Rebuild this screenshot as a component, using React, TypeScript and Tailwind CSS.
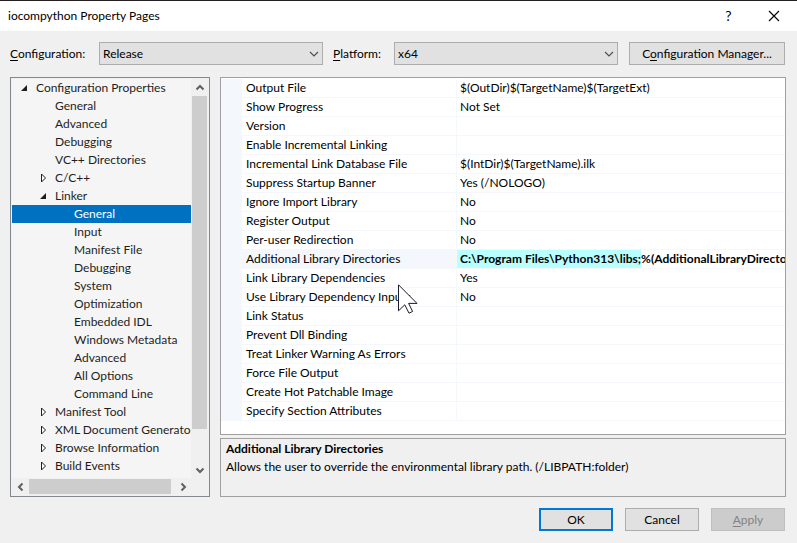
import { useState } from 'react';

type TreeNode = {
  label: string;
  level: 0 | 1 | 2;
  state?: 'open' | 'closed';
};

const tree: TreeNode[] = [
  { label: 'Configuration Properties', level: 0, state: 'open' },
  { label: 'General', level: 1 },
  { label: 'Advanced', level: 1 },
  { label: 'Debugging', level: 1 },
  { label: 'VC++ Directories', level: 1 },
  { label: 'C/C++', level: 1, state: 'closed' },
  { label: 'Linker', level: 1, state: 'open' },
  { label: 'General', level: 2 },
  { label: 'Input', level: 2 },
  { label: 'Manifest File', level: 2 },
  { label: 'Debugging', level: 2 },
  { label: 'System', level: 2 },
  { label: 'Optimization', level: 2 },
  { label: 'Embedded IDL', level: 2 },
  { label: 'Windows Metadata', level: 2 },
  { label: 'Advanced', level: 2 },
  { label: 'All Options', level: 2 },
  { label: 'Command Line', level: 2 },
  { label: 'Manifest Tool', level: 1, state: 'closed' },
  { label: 'XML Document Generator', level: 1, state: 'closed' },
  { label: 'Browse Information', level: 1, state: 'closed' },
  { label: 'Build Events', level: 1, state: 'closed' },
];

const indent = ['pl-0', 'pl-[19px]', 'pl-[38px]'];

const properties = [
  ['Output File', '$(OutDir)$(TargetName)$(TargetExt)'],
  ['Show Progress', 'Not Set'],
  ['Version', ''],
  ['Enable Incremental Linking', ''],
  ['Incremental Link Database File', '$(IntDir)$(TargetName).ilk'],
  ['Suppress Startup Banner', 'Yes (/NOLOGO)'],
  ['Ignore Import Library', 'No'],
  ['Register Output', 'No'],
  ['Per-user Redirection', 'No'],
  ['Additional Library Directories', 'C:\\Program Files\\Python313\\libs;%(AdditionalLibraryDirectories)'],
  ['Link Library Dependencies', 'Yes'],
  ['Use Library Dependency Inputs', 'No'],
  ['Link Status', ''],
  ['Prevent Dll Binding', ''],
  ['Treat Linker Warning As Errors', ''],
  ['Force File Output', ''],
  ['Create Hot Patchable Image', ''],
  ['Specify Section Attributes', ''],
];

const chevrons = {
  up: 'M1.5 6.5 5 3l3.5 3.5',
  down: 'M1.5 3.5 5 7l3.5-3.5',
  left: 'M6.5 1.5 3 5l3.5 3.5',
  right: 'M3.5 1.5 7 5 3.5 8.5',
};

function ScrollButton({ dir }: { dir: keyof typeof chevrons }) {
  return (
    <button aria-label={`Scroll ${dir}`} className="flex size-[17px] shrink-0 items-center justify-center">
      <svg width="10" height="10" viewBox="0 0 10 10" fill="none" stroke="#606060" strokeWidth="2">
        <path d={chevrons[dir]} />
      </svg>
    </button>
  );
}

function Expander({ state }: { state?: 'open' | 'closed' }) {
  return (
    <span className="flex w-6 shrink-0 items-center pl-2">
      {state === 'open' && (
        <svg width="8" height="8" viewBox="0 0 8 8">
          <path d="M7 1v6H1z" fill="#1e1e1e" />
        </svg>
      )}
      {state === 'closed' && (
        <svg width="8" height="10" viewBox="0 0 8 10">
          <path d="M2.5 1v8L6.5 5z" fill="#fff" stroke="#1e1e1e" />
        </svg>
      )}
    </span>
  );
}

function Combo({ id, value }: { id: string; value: string }) {
  return (
    <div className="relative flex-1">
      <select
        id={id}
        className="block h-[23px] w-full appearance-none border border-[#adadad] bg-[#e1e1e1] pr-5 pl-[3px] text-black"
      >
        <option>{value}</option>
      </select>
      <svg
        className="pointer-events-none absolute top-2 right-1"
        width="10"
        height="8"
        viewBox="0 0 10 8"
        fill="none"
        stroke="#505050"
        strokeWidth="1.2"
      >
        <path d="M1 2l4 4 4-4" />
      </svg>
    </div>
  );
}

export default function App() {
  const [selected, setSelected] = useState(7);
  const [active, setActive] = useState(9);

  return (
    <main className="relative min-h-screen w-full border-t border-[#231f20] bg-[#f0f0f0] font-[Lato,'Open_Sans',sans-serif] text-xs text-black">
      <header className="flex h-[30px] items-center bg-white pr-px pl-2">
        <h1 className="flex-1">iocompython Property Pages</h1>
        <button aria-label="Help" className="w-[45px] text-center text-sm">?</button>
        <button aria-label="Close" className="flex w-[45px] justify-center">
          <svg width="12" height="12" viewBox="0 0 12 12" stroke="#000" strokeWidth="1.1">
            <path d="M1 1l10 10M11 1L1 11" />
          </svg>
        </button>
      </header>

      <div className="flex items-center pt-[11px] pr-3 pl-[10px]">
        <label htmlFor="configuration" className="w-[89px]">
          <u className="underline-offset-2">C</u>onfiguration:
        </label>
        <Combo id="configuration" value="Release" />
        <label htmlFor="platform" className="w-[71px] pl-[10px]">
          <u className="underline-offset-2">P</u>latform:
        </label>
        <Combo id="platform" value="x64" />
        <button className="ml-[11px] h-[23px] w-[156px] border border-[#adadad] bg-[#e1e1e1]">
          C<u className="underline-offset-2">o</u>nfiguration Manager...
        </button>
      </div>

      <div className="flex gap-[10px] pt-3 pr-[11px] pl-[10px]">
        <section className="w-[200px] shrink-0 border border-[#828790] bg-[#f0f0f0] p-px">
          <div className="flex">
            <ul role="tree" className="min-w-0 flex-1 overflow-hidden bg-[#f5f5f5] pb-[3px] text-[#1e1e1e]">
              {tree.map((node, i) => (
                <li
                  key={i}
                  role="treeitem"
                  aria-selected={i === selected}
                  onClick={() => setSelected(i)}
                  className={`flex h-[18px] items-center whitespace-nowrap ${indent[node.level]} ${
                    i === selected ? 'bg-[#0070c0] text-white' : ''
                  }`}
                >
                  <Expander state={node.state} />
                  {node.label}
                </li>
              ))}
            </ul>
            <div className="flex w-[17px] flex-col items-center">
              <ScrollButton dir="up" />
              <div className="w-[15px] flex-1 pb-8">
                <div className="h-full bg-[#cdcdcd]" />
              </div>
              <ScrollButton dir="down" />
            </div>
          </div>
          <div className="mr-[17px] flex h-[17px] items-center">
            <ScrollButton dir="left" />
            <div className="mr-[3px] h-[15px] flex-1 bg-[#cdcdcd]" />
            <ScrollButton dir="right" />
          </div>
        </section>

        <div className="flex min-w-0 flex-1 flex-col gap-[3px]">
          <section className="flex-1 border border-[#a0a0a0] bg-white pt-px">
            <table className="w-full table-fixed border-separate border-spacing-0">
              <tbody>
                {properties.map(([name, value], i) => (
                  <tr key={name} onClick={() => setActive(i)} className="h-[19px]">
                    <td className="w-[21px] bg-[#f4f7fc] p-0" />
                    <th
                      scope="row"
                      className={`w-[215px] border-r border-b border-[#f4f7fc] p-0 pl-1 text-left leading-[18px] font-normal whitespace-nowrap ${
                        i === active ? 'bg-[#f4f7fc]' : ''
                      }`}
                    >
                      {name}
                    </th>
                    <td className="overflow-hidden border-b border-[#f4f7fc] p-0 leading-[18px] whitespace-nowrap">
                      {value.startsWith('C:') ? (
                        <b className="block h-[18px]">
                          <mark className="inline-block bg-[#b9ffff] pl-[3px] text-black">{value.split('%')[0]}</mark>%
                          {value.split('%')[1]}
                        </b>
                      ) : (
                        <span className="pl-[3px]">{value}</span>
                      )}
                    </td>
                  </tr>
                ))}
              </tbody>
            </table>
          </section>
          <section className="h-[59px] border border-[#a0a0a0] px-[5px] pt-px leading-[18px]">
            <h2 className="font-bold">Additional Library Directories</h2>
            <p>Allows the user to override the environmental library path. (/LIBPATH:folder)</p>
          </section>
        </div>
      </div>

      <footer className="flex justify-end gap-3 pt-[11px] pr-3">
        <button className="h-[23px] w-[74px] border-2 border-[#0078d7] bg-[#e1e1e1]">OK</button>
        <button className="h-[23px] w-[74px] border border-[#adadad] bg-[#e1e1e1]">Cancel</button>
        <button disabled className="h-[23px] w-[74px] border border-[#bfbfbf] bg-[#cccccc] text-[#838383]">
          <u className="underline-offset-2">A</u>pply
        </button>
      </footer>

      {/* mouse pointer */}
      <svg className="pointer-events-none absolute top-[283px] left-[398px]" width="20" height="31" viewBox="0 0 20 31">
        <path d="M.5.8v26l6.3-6 4.2 8.4 3.6-1.8-4-8h8.4z" fill="#fff" stroke="#1a1a2a" />
      </svg>
    </main>
  );
}
